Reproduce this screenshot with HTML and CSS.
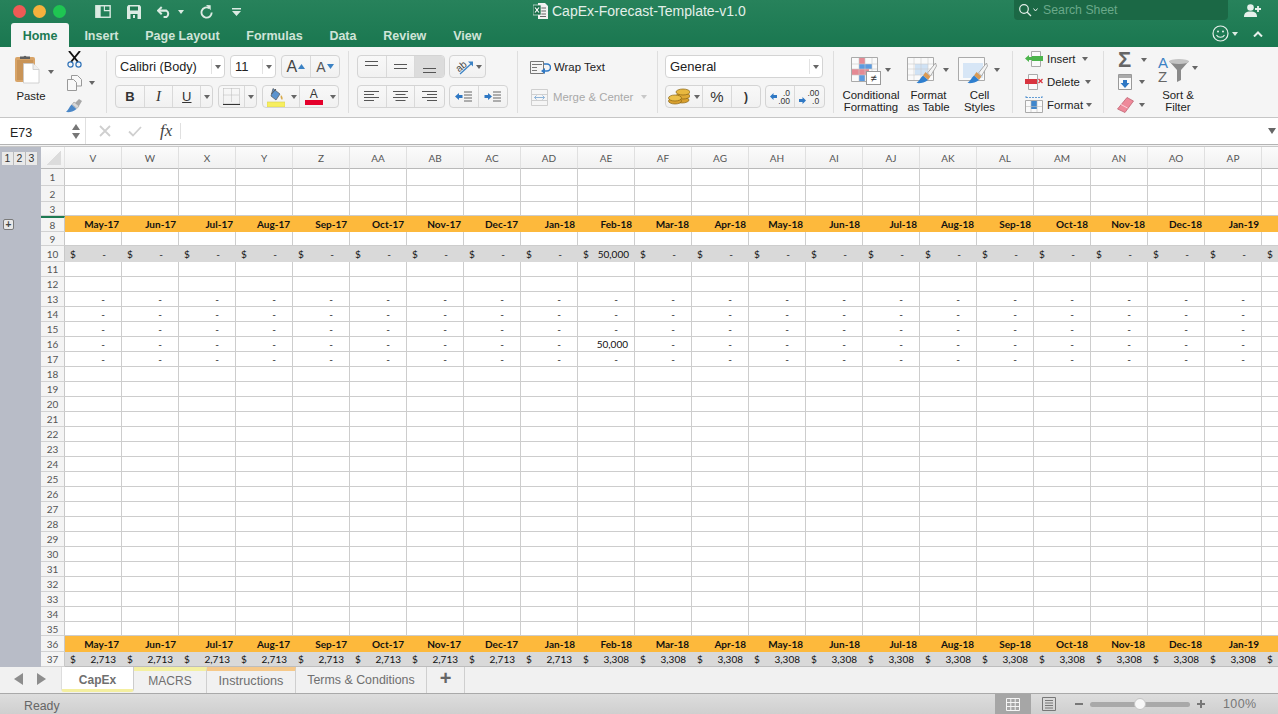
FILE: index.html
```html
<!DOCTYPE html>
<html lang="en">
<head>
<meta charset="utf-8">
<title>CapEx-Forecast-Template-v1.0</title>
<link rel="stylesheet" href="styles.css">
</head>
<body>
<svg class="defs" width="0" height="0" aria-hidden="true">
  <symbol id="brush" viewBox="0 0 20 22">
    <path d="M19 1 L11 11 L14 14 L20 4 Z" fill="#f4f4f4" stroke="#9a9a9a" stroke-width=".8"/>
    <path d="M9 10 L14 14.5 L11.5 18 L6.5 13.5 Z" fill="#d99a55"/>
    <path d="M6.5 13.5 L11.5 18 C8 21 3 21.5 0 21 C3 19 3.5 16 6.5 13.5 Z" fill="#2f7fcf"/>
  </symbol>
</svg>

<header class="titlebar">
  <div class="titlerow">
    <div class="title-left">
      <span class="light red"></span><span class="light amber"></span><span class="light green"></span>
      <svg class="qat q-side" width="16" height="13" viewBox="0 0 17 14"><rect x=".8" y=".8" width="15.4" height="12.4" fill="none" stroke="#dcebe3" stroke-width="1.5"/><rect x="1" y="1" width="5" height="12" fill="#dcebe3"/><path d="M10 1v5h6" fill="none" stroke="#dcebe3" stroke-width="1.2"/></svg>
      <svg class="qat q-save" width="14" height="14" viewBox="0 0 14 14"><path d="M0 1.5 1.5 0H12.5L14 1.5V14H0Z" fill="#dcebe3"/><rect x="3" y="1.5" width="8" height="4" fill="#1f7a52"/><rect x="3.5" y="9" width="7" height="5" fill="#1f7a52"/><rect x="6" y="10" width="2" height="3" fill="#dcebe3"/></svg>
      <svg class="qat q-undo" width="15" height="12" viewBox="0 0 16 13"><path d="M5 1 1 5l4 4" fill="none" stroke="#dcebe3" stroke-width="2.2"/><path d="M2 5h8a4 4 0 0 1 0 7H7" fill="none" stroke="#dcebe3" stroke-width="2.2"/></svg>
      <span class="caret light-caret q-undo-caret"></span>
      <svg class="qat q-redo" width="13" height="14" viewBox="0 0 14 15"><path d="M10 3.4A5.5 5.5 0 1 0 12.6 8" fill="none" stroke="#dcebe3" stroke-width="2"/><path d="M6.500 0 11.500 .2 11.500 5.500Z" fill="#dcebe3"/></svg>
      <svg class="qat q-more" width="9" height="8" viewBox="0 0 9 8"><path d="M0 0h9v1.500H0ZM0 3h9L4.500 8Z" fill="#dcebe3"/></svg>
    </div>
    <svg class="doc-icon" width="15" height="16" viewBox="0 0 15 16"><path d="M5 0h7l3 3v13H5Z" fill="#f2f2f2"/><path d="M7 5h6M7 8h6M7 11h6M7 13.500h6" stroke="#666" stroke-width="1"/><rect x="0" y="2" width="8" height="10" fill="#1b6f4a" stroke="#e8f0ec" stroke-width=".7"/><path d="M2 4.500 6 9.500M6 4.500 2 9.500" stroke="#fff" stroke-width="1.200"/></svg>
    <div class="doc-title">CapEx-Forecast-Template-v1.0</div>
    <div class="search">
      <svg width="14" height="14" viewBox="0 0 14 14"><circle cx="6" cy="6" r="4.300" fill="none" stroke="#e4efe9" stroke-width="1.200"/><path d="m9 9 4 4" stroke="#e4efe9" stroke-width="1.300"/></svg>
      <svg class="search-chev" width="5" height="4" viewBox="0 0 5 4"><path d="M.5.500 2.500 3l2-2.500" fill="none" stroke="#e4efe9"/></svg>
      <span class="search-text">Search Sheet</span>
    </div>
    <svg class="share" width="18" height="13" viewBox="0 0 18 13"><circle cx="6.500" cy="3.500" r="3.300" fill="#e6f0eb"/><path d="M0 13c0-4 2-5.500 6.500-5.500S13 9 13 13Z" fill="#e6f0eb"/><path d="M14 2v6M11 5h6" stroke="#e6f0eb" stroke-width="1.800"/></svg>
  </div>
  <div class="tabrow">
    <nav class="ribbon-tabs">
      <span class="rtab active">Home</span>
      <span class="rtab">Insert</span>
      <span class="rtab">Page Layout</span>
      <span class="rtab">Formulas</span>
      <span class="rtab">Data</span>
      <span class="rtab">Review</span>
      <span class="rtab">View</span>
    </nav>
    <div class="tab-tools">
      <svg width="17" height="17" viewBox="0 0 17 17"><circle cx="8.500" cy="8.500" r="7.500" fill="none" stroke="#e6f0eb" stroke-width="1.200"/><circle cx="6" cy="6.500" r="1" fill="#e6f0eb"/><circle cx="11" cy="6.500" r="1" fill="#e6f0eb"/><path d="M4.500 10c1.500 3 6.500 3 8 0" fill="none" stroke="#e6f0eb" stroke-width="1.100"/></svg>
      <span class="caret light-caret smile-caret"></span>
      <svg class="chev-up" width="10" height="6" viewBox="0 0 10 6"><path d="M1 5.500 5 1.500l4 4" fill="none" stroke="#e6f0eb" stroke-width="2"/></svg>
    </div>
  </div>
</header>

<section class="ribbon">
  <div class="group g-clip">
    <div class="paste">
      <div class="paste-top">
        <svg width="25" height="30" viewBox="0 0 25 30"><rect x="0" y="3" width="20" height="25" rx="2" fill="#d8a468"/><rect x="2" y="6" width="16" height="20" fill="#c99457"/><path d="M5 5V2.500h3.500a2 2 0 0 1 3 0H15V5Z" fill="#5f5f5f"/><path d="M8.500 9.500h9.500l6 6V29H8.500Z" fill="#fff" stroke="#c8c8c8" stroke-width=".8"/><path d="M18 9.500v6h6" fill="#eee" stroke="#c8c8c8" stroke-width=".8"/></svg>
        <span class="caret paste-caret"></span>
      </div>
      <span class="label">Paste</span>
    </div>
    <div class="clip-tools">
      <svg width="15" height="17" viewBox="0 0 15 17"><path d="M2 0 11 11M13 0 4 11" stroke="#111" stroke-width="1.900"/><circle cx="3.500" cy="13.500" r="2.600" fill="none" stroke="#2f72b8" stroke-width="1.200"/><circle cx="11.500" cy="13.500" r="2.600" fill="none" stroke="#2f72b8" stroke-width="1.200"/></svg>
      <div class="copy-line">
        <svg width="15" height="16" viewBox="0 0 15 16"><path d="M4.500.500h6l4 4V11h-10Z" fill="#f8f8f8" stroke="#999"/><path d="M.5 4.500h6l3 3v8H.5Z" fill="#f8f8f8" stroke="#999"/></svg>
        <span class="caret copy-caret"></span>
      </div>
      <svg class="painter" width="17" height="15" viewBox="0 0 17 15"><path d="M9 5l4-4 3 2-3 5Z" fill="#a7a7a7"/><path d="M8 4l5 4-2 2.500-5-4Z" fill="#d8d8d8" stroke="#888" stroke-width=".5"/><path d="M5.500 6.500 10.500 11C7 14 3 14.500 0 14 2.500 12 3 9 5.500 6.500Z" fill="#4b87c7"/></svg>
    </div>
  </div>

  <div class="group g-font">
    <div class="row">
      <div class="combo font-name"><span>Calibri (Body)</span><i class="combo-arrow"><b class="caret"></b></i></div>
      <div class="combo font-size"><span>11</span><i class="combo-arrow"><b class="caret"></b></i></div>
      <div class="seg">
        <span class="btn w29 big-a">A<svg class="tri-up" width="7" height="5" viewBox="0 0 7 5"><path d="M0 5 3.500 0 7 5Z" fill="#3b82c4"/></svg></span>
        <span class="btn w29 small-a">A<svg class="tri-up" width="7" height="5" viewBox="0 0 7 5"><path d="M0 0 3.500 5 7 0Z" fill="#3b82c4"/></svg></span>
      </div>
    </div>
    <div class="row">
      <div class="seg">
        <span class="btn w29 bold-b">B</span>
        <span class="btn w29 ital-i">I</span>
        <span class="btn w28 under-u">U</span>
        <span class="btn w11"><b class="caret"></b></span>
      </div>
      <div class="seg">
        <span class="btn w26">
          <svg width="17" height="17" viewBox="0 0 17 17"><path d="M.5.500h16v16M.5.500v16M8.500.500v13M.5 7h16" fill="none" stroke="#b9b9b9" stroke-dasharray="1 1"/><path d="M0 16.500h17" stroke="#333" stroke-width="1.200"/></svg>
        </span>
        <span class="btn w11 no-line"><b class="caret"></b></span>
      </div>
      <div class="seg">
        <span class="btn w26 no-line">
          <svg width="18" height="20" viewBox="0 0 18 20"><path d="M6 1.500 13 7l-4 6-5-4Z" fill="#5b93cf" stroke="#555" stroke-width=".7"/><path d="M4.500 7 9 2" stroke="#555" fill="none"/><path d="M14 8c2 2 2 4 1 5-1-1-2-3-1-5Z" fill="#d8a948"/><rect x="0" y="15" width="18" height="5" fill="#f7ee5e" stroke="#d8cf55" stroke-width=".6"/></svg>
        </span>
        <span class="btn w11"><b class="caret"></b></span>
        <span class="btn w27 no-line color-a"><span class="color-a-letter">A</span><i class="red-bar"></i></span>
        <span class="btn w11 no-line"><b class="caret"></b></span>
      </div>
    </div>
  </div>

  <div class="group g-align">
    <div class="row">
      <div class="seg">
        <span class="btn w29"><svg class="al-top" width="13" height="6" viewBox="0 0 13 6"><path d="M0 .500h13M0 4.500h13" stroke="#555"/></svg></span>
        <span class="btn w29"><svg width="13" height="6" viewBox="0 0 13 6"><path d="M0 .500h13M0 4.500h13" stroke="#555"/></svg></span>
        <span class="btn w29 pressed"><svg class="al-bottom" width="13" height="6" viewBox="0 0 13 6"><path d="M0 .500h13M0 4.500h13" stroke="#555"/></svg></span>
      </div>
      <div class="seg">
        <span class="btn w35 orient">
          <svg class="orient-icon" width="19" height="17" viewBox="0 0 19 17"><text x="1" y="12" transform="rotate(-40 6 9)" class="orient-text">ab</text><path d="M5 16 17 5" stroke="#3b82c4" stroke-width="1.300"/><path d="M13 3.500h5v5Z" fill="#3b82c4"/></svg>
          <b class="caret"></b>
        </span>
      </div>
    </div>
    <div class="row">
      <div class="seg">
        <span class="btn w29"><svg width="15" height="11" viewBox="0 0 15 11"><path d="M0 .500h15M0 3.500h10M0 6.500h15M0 9.500h10" stroke="#555"/></svg></span>
        <span class="btn w29"><svg width="15" height="11" viewBox="0 0 15 11"><path d="M0 .500h15M2.500 3.500h10M0 6.500h15M2.500 9.500h10" stroke="#555"/></svg></span>
        <span class="btn w29"><svg width="15" height="11" viewBox="0 0 15 11"><path d="M0 .500h15M5 3.500h10M0 6.500h15M5 9.500h10" stroke="#555"/></svg></span>
      </div>
      <div class="seg">
        <span class="btn w29"><svg width="17" height="11" viewBox="0 0 17 11"><path d="M0 5.500 4 2v2h3.500v3H4v2Z" fill="#2f78c4" transform="translate(0 0)"/><path d="M9 1h8M9 4h8M9 7h8M9 10h8" stroke="#666"/></svg></span>
        <span class="btn w29"><svg width="17" height="11" viewBox="0 0 17 11"><path d="M8 5.500 4 2v2H.5v3H4v2Z" fill="#2f78c4"/><path d="M9 1h8M9 4h8M9 7h8M9 10h8" stroke="#666"/></svg></span>
      </div>
    </div>
  </div>

  <div class="group g-wrap">
    <div class="wrap-line">
      <svg width="21" height="13" viewBox="0 0 21 13"><path d="M.5.500h13v12H.5ZM2 3.500h10M2 6.500h5M2 9.500h5" fill="none" stroke="#777"/><path d="M14 3h3a3 3 0 0 1 0 7h-3" fill="none" stroke="#2f78c4" stroke-width="1.500"/><path d="M15 7v6l-4-3Z" fill="#2f78c4"/></svg>
      <span class="label">Wrap Text</span>
    </div>
    <div class="wrap-line merge">
      <svg width="17" height="17" viewBox="0 0 17 17"><path d="M.5.500h16v16H.5ZM.5 5.500h16M.5 11.500h16" fill="none" stroke="#cfcfcf"/><path d="M3.500 8.500h10M5.500 6.500l-2 2 2 2M11.500 6.500l2 2-2 2" fill="none" stroke="#8fb4d8"/></svg>
      <span class="label">Merge &amp; Center</span>
      <span class="caret pale-caret"></span>
    </div>
  </div>

  <div class="group g-number">
    <div class="combo general"><span>General</span><i class="combo-arrow"><b class="caret"></b></i></div>
    <div class="row">
      <div class="seg">
        <span class="btn w26 no-line">
          <svg width="22" height="17" viewBox="0 0 22 17"><ellipse cx="14" cy="12" rx="7" ry="3" fill="#d9a02e" stroke="#8a6414" stroke-width=".7"/><ellipse cx="15" cy="8" rx="7" ry="3" fill="#dfa934" stroke="#8a6414" stroke-width=".7"/><ellipse cx="15" cy="4" rx="7" ry="3" fill="#e8b83f" stroke="#8a6414" stroke-width=".7"/><ellipse cx="7" cy="13" rx="6.500" ry="3" fill="#d9a02e" stroke="#8a6414" stroke-width=".7"/><ellipse cx="7" cy="10" rx="6.500" ry="3" fill="#ecc04a" stroke="#8a6414" stroke-width=".7"/></svg>
        </span>
        <span class="btn w11"><b class="caret"></b></span>
        <span class="btn w29 percent">%</span>
        <span class="btn w29 comma">)</span>
      </div>
      <div class="seg">
        <span class="btn w29 decimal"><svg width="7" height="7" viewBox="0 0 7 7"><path d="M0 3.500 3.500 0v2H7v3H3.500v2Z" fill="#2f78c4"/></svg><span class="dec-stack"><em>.0</em><em>.00</em></span></span>
        <span class="btn w29 decimal"><svg class="low" width="7" height="7" viewBox="0 0 7 7"><path d="M7 3.500 3.500 0v2H0v3h3.500v2Z" fill="#2f78c4"/></svg><span class="dec-stack"><em>.00</em><em>.0</em></span></span>
      </div>
    </div>
  </div>

  <div class="group g-styles">
    <div class="style-item si-cond">
      <div class="style-icon">
        <svg width="30" height="28" viewBox="0 0 30 28"><path d="M.5.500h26v24H.5Z" fill="#fafafa" stroke="#aaa"/><rect x="8" y="1" width="6" height="6" fill="#e58a94"/><rect x="8" y="7" width="13" height="5" fill="#5c9be0"/><rect x="1" y="12" width="17" height="6" fill="#e58a94"/><rect x="8" y="18" width="6" height="6" fill="#5c9be0"/><path d="M8 1v23M14 1v23M21 1v23M1 7h25M1 12h25M1 18h25" stroke="#c9c9c9" stroke-width=".6"/><rect x="15.500" y="14.500" width="14" height="13" fill="#fff" stroke="#999"/><text x="22.500" y="25" class="neq">≠</text></svg>
        <span class="caret"></span>
      </div>
      <span class="label">Conditional<br>Formatting</span>
    </div>
    <div class="style-item si-table">
      <div class="style-icon">
        <svg width="32" height="27" viewBox="0 0 32 27"><path d="M.5.500h26v23H.5Z" fill="#fafafa" stroke="#aaa"/><rect x="8" y="7" width="13" height="11" fill="#cfe2f5"/><path d="M7 1v22M14 1v22M21 1v22M1 7h25M1 12h25M1 18h25" stroke="#cdcdcd" stroke-width=".6"/><use href="#brush" x="7" y="5" width="25" height="22"/></svg>
        <span class="caret"></span>
      </div>
      <span class="label">Format<br>as Table</span>
    </div>
    <div class="style-item si-cell">
      <div class="style-icon">
        <svg width="32" height="27" viewBox="0 0 32 27"><path d="M.5.500h26v23H.5Z" fill="#fafafa" stroke="#aaa"/><rect x="5" y="6" width="20" height="15" fill="#d7e6f6"/><use href="#brush" x="7" y="5" width="25" height="22"/></svg>
        <span class="caret"></span>
      </div>
      <span class="label">Cell<br>Styles</span>
    </div>
  </div>

  <div class="group g-cells">
    <div class="cell-line">
      <svg width="18" height="16" viewBox="0 0 18 16"><path d="M6.500.500h9v15h-9Z" fill="#fafafa" stroke="#aaa"/><rect x="7" y="5" width="11" height="5" fill="#4bb44b"/><path d="M0 7.500 4 4v2h3v3H4v2Z" fill="#4bb44b"/></svg>
      <span class="label">Insert</span><span class="caret c-ins"></span>
    </div>
    <div class="cell-line">
      <svg width="18" height="16" viewBox="0 0 18 16"><path d="M3.500.500h9v15h-9Z" fill="#fafafa" stroke="#aaa"/><rect x="0" y="5" width="12" height="5" fill="#d8343f"/><path d="m13.500 5 4 4m0-4-4 4" stroke="#d8343f" stroke-width="1.300"/></svg>
      <span class="label">Delete</span><span class="caret c-del"></span>
    </div>
    <div class="cell-line">
      <svg width="18" height="17" viewBox="0 0 18 17"><path d="M.5 4.500h17v12H.5Z" fill="#fafafa" stroke="#aaa"/><rect x="6" y="5" width="6" height="8" fill="#3f86cc"/><path d="M1 10.500h16M6 5v11M12 5v11" stroke="#bbb" stroke-width=".6"/><path d="M1 1.500h16M1 0v3M17 0v3" stroke="#3f86cc" stroke-width=".8" stroke-dasharray="2 1"/></svg>
      <span class="label">Format</span><span class="caret c-fmt"></span>
    </div>
  </div>

  <div class="group g-edit">
    <div class="edit-col">
      <div class="edit-line"><span class="sigma">Σ</span><span class="caret"></span></div>
      <div class="edit-line"><svg width="14" height="16" viewBox="0 0 14 16"><path d="M.5.500h13v15H.5Z" fill="#fafafa" stroke="#999"/><rect x="1" y="1" width="12" height="3" fill="#aaa"/><path d="M5 6h4v3h2.500L7 14 2.500 9H5Z" fill="#2f78c4"/></svg><span class="caret"></span></div>
      <div class="edit-line"><svg width="17" height="16" viewBox="0 0 17 16"><path d="M10 .5 16.500 4 8 15.500 .5 12Z" fill="#ee8a9a" stroke="#b85a6a" stroke-width=".7"/><path d="M4 7.500 10.500 11" stroke="#fbd3da"/></svg><span class="caret"></span></div>
    </div>
    <div class="sort">
      <div class="sort-icon">
        <svg class="sort-svg" width="32" height="26" viewBox="0 0 32 26"><text x="0" y="11" class="az-a">A</text><text x="0" y="25" class="az-z">Z</text><path d="M11 4h20l-8 9v10l-4 2V13Z" fill="#8a8a8a"/><ellipse cx="21" cy="4.500" rx="10" ry="2.400" fill="#c4c4c4"/></svg>
        <span class="caret"></span>
      </div>
      <span class="label">Sort &amp;<br>Filter</span>
    </div>
  </div>
</section>

<section class="formula">
  <div class="namebox">
    <span class="name-text">E73</span>
    <div class="stepper"><i class="st-up"></i><i class="st-down"></i></div>
  </div>
  <div class="fx-tools">
    <svg width="12" height="12" viewBox="0 0 12 12"><path d="m1 1 10 10m0-10L1 11" stroke="#cfcfcf" stroke-width="1.800"/></svg>
    <svg width="14" height="11" viewBox="0 0 14 11"><path d="m1 5.500 4 4L13 1" fill="none" stroke="#cfcfcf" stroke-width="1.800"/></svg>
    <span class="fx">fx</span>
  </div>
  <div class="formula-input"></div>
  <span class="formula-down"></span>
</section>
<div class="formula-rule"></div>

<main class="sheet">
  <aside class="outline">
    <div class="levels"><span>1</span><span>2</span><span>3</span></div>
    <span class="expand">+</span>
  </aside>
  <div class="grid" id="grid"></div>
</main>

<footer>
  <div class="sheet-tabs">
    <div class="tab-nav">
      <svg width="9" height="12" viewBox="0 0 9 12"><path d="M9 0v12L0 6Z" fill="#8d8d8d"/></svg>
      <svg width="9" height="12" viewBox="0 0 9 12"><path d="M0 0v12L9 6Z" fill="#8d8d8d"/></svg>
    </div>
    <span class="stab current">CapEx</span>
    <span class="stab macrs">MACRS</span>
    <span class="stab instr">Instructions</span>
    <span class="stab terms">Terms &amp; Conditions</span>
    <span class="stab add">+</span>
  </div>
  <div class="status">
    <span class="ready">Ready</span>
    <div class="view-btns">
      <span class="view selected"><svg width="14" height="13" viewBox="0 0 14 13"><path d="M.5.500h13v12H.5ZM.5 4.500h13M.5 8.500h13M4.800.500v12M9.200.500v12" fill="none" stroke="#f5f5f5"/></svg></span>
      <span class="view"><svg width="14" height="14" viewBox="0 0 14 14"><path d="M.5.500h13v13H.5Z" fill="none" stroke="#777"/><path d="M3 3.500h8M3 6h8M3 8.500h8M3 11h8" stroke="#777"/></svg></span>
    </div>
    <div class="zoom">
      <i class="zoom-minus"></i>
      <div class="track"><i class="knob"></i></div>
      <i class="zoom-plus"></i>
    </div>
    <span class="percent-label">100%</span>
  </div>
</footer>
<script src="app.js"></script>
</body>
</html>
```

FILE: styles.css
```css
* { box-sizing: border-box; }
html, body { margin: 0; padding: 0; }
body {
  width: 1278px; height: 714px; overflow: hidden;
  display: flex; flex-direction: column;
  font-family: "Liberation Sans", Arial, sans-serif;
  color: #333; background: #fff;
}
.defs { position: absolute; }
svg { display: block; flex: none; }
.caret {
  display: block; flex: none; width: 0; height: 0;
  border-left: 3px solid transparent; border-right: 3px solid transparent;
  border-top: 4px solid #666;
}
.light-caret { border-top-color: #dcebe3; }
.pale-caret { border-top-color: #c8c8c8; }

/* title bar */
.titlebar { height: 47px; flex: none; background: linear-gradient(#27825b, #1a7750); }
.titlerow { height: 23px; display: flex; align-items: center; }
.title-left { width: 533px; height: 100%; display: flex; align-items: center; flex: none; padding-left: 13px; }
.light { width: 13px; height: 13px; border-radius: 50%; margin-right: 7px; flex: none; }
.red { background: #ee5a55; }
.amber { background: #f5b13d; }
.green { background: #1fc552; }
.q-side { margin-left: 22px; }
.q-save { margin-left: 16px; }
.q-undo { margin-left: 16px; }
.q-undo-caret { margin-left: 6px; }
.q-redo { margin-left: 16px; }
.q-more { margin-left: 19px; }
.doc-icon { margin-top: -2px; }
.doc-title { margin-left: 4px; width: 462px; flex: none; font-size: 14px; color: #e3efe9; margin-top: -1px; white-space: nowrap; }
.search {
  width: 214px; height: 20px; margin-top: -3px; flex: none;
  background: #1b6845; border-radius: 0 0 4px 4px;
  display: flex; align-items: center; padding-left: 4px;
}
.search-chev { margin-left: 1px; }
.search-text { margin-left: 5px; font-size: 12.3px; color: #6aa98a; }
.share { margin-left: 16px; margin-top: -3px; }
.tabrow { height: 24px; display: flex; justify-content: space-between; }
.ribbon-tabs { display: flex; padding-left: 11px; align-items: stretch; }
.rtab { font-size: 12.5px; font-weight: bold; color: #cfe4d8; padding: 6px 13.4px 0; white-space: nowrap; }
.rtab.active { width: 58px; margin-right: 2px; padding: 6px 0 0; text-align: center; background: #f5f5f5; color: #1d7a52; border-radius: 3px 3px 0 0; }
.tab-tools { display: flex; align-items: center; padding: 0 15px 3px 0; }
.smile-caret { margin-left: 3px; }
.chev-up { margin-left: 15px; }

/* ribbon */
.ribbon { height: 71px; flex: none; background: #f5f5f5; border-bottom: 1px solid #c6c6c6; display: flex; padding: 4px 0 4px; }
.group { height: 62px; flex: none; border-right: 1px solid #dedede; }
.label { font-size: 11.4px; color: #222; line-height: 12px; white-space: nowrap; }
.row { display: flex; gap: 5px; }
.seg, .combo {
  height: 23px; border: 1px solid #d4d4d4; border-radius: 4px;
  background: linear-gradient(#f8f8f8, #f1f1f1); display: flex;
}
.btn { display: flex; align-items: center; justify-content: center; border-right: 1px solid #d9d9d9; height: 100%; font-size: 13px; color: #333; }
.btn:last-child, .no-line { border-right: 0; }
.w11 { width: 11px; } .w26 { width: 26px; } .w27 { width: 27px; }
.w28 { width: 28px; } .w29 { width: 28.67px; } .w35 { width: 35px; }
.combo { background: #fff; font-size: 13px; color: #222; align-items: center; padding-left: 4px; }
.combo span { flex: 1; white-space: nowrap; }
.combo-arrow { width: 13px; height: 15px; border-left: 1px solid #e2e2e2; display: flex; align-items: center; justify-content: center; }

.g-clip { width: 107px; display: flex; padding-left: 15px; }
.paste { width: 51px; display: flex; flex-direction: column; }
.paste-top { display: flex; height: 39px; padding-top: 3px; }
.paste-caret { margin: 16px 0 0 8px; }
.paste .label { margin-left: 1px; width: 30px; text-align: center; }
.clip-tools { display: flex; flex-direction: column; gap: 7px; }
.clip-tools > svg:first-child { margin-left: 1px; }
.copy-line { display: flex; align-items: center; margin-left: 1px; }
.copy-caret { margin-left: 7px; }

.g-font { width: 242px; padding: 4px 0 0 8px; display: flex; flex-direction: column; gap: 7px; }
.font-name { width: 110px; font-size: 12.7px; }
.font-size { width: 46px; }
.big-a { font-size: 16px; gap: 1px; color: #444; }
.small-a { font-size: 14px; gap: 1px; color: #555; }
.bold-b { font-weight: bold; font-size: 13px; }
.ital-i { font-style: italic; font-family: "Liberation Serif", serif; font-size: 15px; }
.under-u { text-decoration: underline; font-size: 13px; }
.color-a { flex-direction: column; justify-content: flex-start; padding-top: 2px; }
.color-a-letter { font-size: 12px; line-height: 12px; }
.red-bar { width: 18px; height: 5px; background: #e4002b; }

.g-align { width: 169px; padding: 4px 0 0 8px; display: flex; flex-direction: column; gap: 7px; }
.g-align .row { gap: 4px; }
.pressed { background: #dcdcdc; border-radius: 0 3px 3px 0; }
.al-top { margin-top: -5px; }
.al-bottom { margin-top: 9px; }
.orient { gap: 2px; padding-left: 3px; }
.orient-icon { overflow: visible; }
.orient-text { font: 10px "Liberation Sans", sans-serif; fill: #444; }

.g-wrap { width: 140px; padding: 8px 0 0 12px; display: flex; flex-direction: column; gap: 14px; }
.wrap-line { display: flex; align-items: center; gap: 3px; height: 16px; }
.merge { gap: 5px; margin-left: 1px; }
.merge .label { color: #a9a9a9; }
.merge .caret { margin-left: 3px; }

.g-number { width: 176px; padding: 4px 0 0 7px; display: flex; flex-direction: column; gap: 7px; }
.general { width: 158px; }
.g-number .row { gap: 4px; }
.percent { font-size: 15px; }
.comma { font-weight: bold; font-size: 12px; }
.decimal { gap: 1px; font-size: 0; }
.decimal .low { margin-top: 8px; }
.dec-stack { display: flex; flex-direction: column; align-items: flex-end; }
.dec-stack em { font-style: normal; font-size: 8.5px; line-height: 8px; color: #333; }

.g-styles { width: 179px; display: flex; padding-left: 5px; }
.style-item { display: flex; flex-direction: column; align-items: center; text-align: center; }
.si-cond { width: 64px; }
.si-table { width: 51px; }
.si-cell { width: 51px; }
.style-icon { height: 41px; display: flex; padding-top: 6px; }
.style-icon .caret { margin: 11px 0 0 4px; }
.si-table .style-icon, .si-cell .style-icon { margin-right: 1px; }

.neq { font: 11px "Liberation Sans", sans-serif; fill: #333; text-anchor: middle; }

.g-cells { width: 91px; padding: 0 0 0 12px; display: flex; flex-direction: column; gap: 6px; }
.cell-line { height: 17px; display: flex; align-items: center; }
.cell-line .label { margin-left: 4px; }
.c-ins { margin-left: 6px; }
.c-del { margin-left: 5px; }
.c-fmt { margin-left: 3px; }

.g-edit { flex: 1; border-right: 0; display: flex; padding-left: 14px; }
.edit-col { display: flex; flex-direction: column; gap: 6px; width: 37px; }
.edit-line { height: 17px; display: flex; align-items: center; gap: 7px; }
.sigma { width: 16px; font-size: 22px; line-height: 17px; color: #666; font-weight: bold; }
.edit-line svg { width: 14px; }
.edit-line:last-child svg { width: 17px; margin-left: -1px; }
.edit-line:last-child { gap: 5px; }
.sort { width: 46px; display: flex; flex-direction: column; align-items: center; text-align: center; }
.sort-icon { height: 41px; display: flex; padding-top: 6px; }
.sort-svg { overflow: visible; }
.sort-icon .caret { margin: 9px 0 0 2px; }
.az-a { font: 15px "Liberation Sans", sans-serif; fill: #3b82c4; }
.az-z { font: 15px "Liberation Sans", sans-serif; fill: #666; }

/* formula bar */
.formula { height: 26px; flex: none; display: flex; align-items: center; background: #fff; }
.namebox { width: 86px; height: 100%; display: flex; align-items: center; justify-content: space-between; padding: 0 5px 0 10px; border-right: 1px solid #e0e0e0; font-size: 12.5px; color: #222; }
.name-text { padding-top: 3px; }
.stepper { display: flex; flex-direction: column; gap: 3px; }
.st-up { border-left: 4px solid transparent; border-right: 4px solid transparent; border-bottom: 6px solid #777; }
.st-down { border-left: 4px solid transparent; border-right: 4px solid transparent; border-top: 6px solid #777; }
.fx-tools { width: 95px; height: 16px; display: flex; align-items: center; padding-left: 13px; border-right: 1px solid #e0e0e0; }
.fx-tools svg + svg { margin-left: 17px; }
.fx { margin-left: 18px; font: italic 17px "Liberation Serif", serif; color: #444; }
.formula-input { flex: 1; }
.formula-down { margin-right: 2px; border-left: 4px solid transparent; border-right: 4px solid transparent; border-top: 6px solid #666; }
.formula-rule { height: 3px; flex: none; border-top: 1px solid #b4b4b4; border-bottom: 1px solid #c8c8c8; background: #f2f2f2; }

/* sheet */
.sheet { height: 520px; flex: none; display: flex; overflow: hidden; }
.outline { width: 41px; flex: none; background: #b8bcc7; display: flex; flex-direction: column; align-items: flex-start; }
.levels { width: 100%; height: 22px; background: #b8bcc7; display: flex; gap: 0; padding: 5px 0 0 2px; }
.levels span { width: 12px; height: 13px; background: #e9e9e9; font: 10.5px/13px "Liberation Sans", sans-serif; color: #333; text-align: center; border-right: 1px solid #bbb; }
.expand {
  width: 11px; height: 11px; margin: 50px 0 0 3px; background: #e8e8e8; border: 1px solid #7a7a7a; border-radius: 2px;
  font: bold 10px/9px "Liberation Sans", sans-serif; text-align: center; color: #444;
}
.grid { flex: 1; overflow: hidden; font-family: Lato, "Liberation Sans", sans-serif; font-size: 10px; color: #111; }
.r { display: flex; height: 15px; }
.h14 { height: 14px; } .h16 { height: 16px; } .h17 { height: 17px; } .h22 { height: 22px; }
.rh {
  width: 24px; flex: none; background: #f4f4f4; color: #555; font-size: 10px;
  display: flex; align-items: center; justify-content: center;
  border-right: 1px solid #c8c8c8; border-bottom: 1px solid #d2d2d2;
}
.c {
  width: 57px; flex: none; border-right: 1px solid #cdcdcd; border-bottom: 1px solid #cdcdcd;
  display: flex; align-items: center; justify-content: space-between; white-space: nowrap; padding: 0 6px 0 5px;
}
.c .dash { margin-left: auto; padding-right: 10px; color: #222; }
.c .num { margin-left: auto; color: #111; }
.head .rh { background: linear-gradient(#fbfbfb, #f0f0f0); border-bottom: 1px solid #b9b9b9; border-right: 1px solid #e2e2e2; position: relative; overflow: hidden; }
.corner { width: 15px; height: 15px; background: linear-gradient(135deg, transparent 50%, #dcdcdc 50%); margin-left: 1px; }
.head .c { justify-content: center; background: linear-gradient(#fbfbfb, #f1f1f1); color: #555; font-size: 10px; border-right: 1px solid #e0e0e0; border-bottom: 1px solid #b9b9b9; padding: 0; }
.month .c { background: #fdb93c; border: 0; justify-content: flex-end; padding-right: 3px; font-weight: bold; color: #111; font-size: 10px; }
.total .c { background: #d9d9d9; border-right: 0; border-bottom: 1px solid #d9d9d9; }
.total.last .c { border-bottom: 1px solid #bdbdbd; }
.total .rh { border-bottom-color: #d2d2d2; }
.rh.sel-top { border-top: 2px solid #1d7a52; }

/* sheet tabs */
.sheet-tabs { height: 27px; flex: none; background: #f1f1f1; display: flex; border-bottom: 1px solid #a9a9a9; }
.tab-nav { width: 61px; display: flex; align-items: center; gap: 14px; padding: 0 0 3px 14px; }
.stab { font-size: 12.4px; color: #6f6f6f; display: flex; align-items: center; justify-content: center; border-right: 1px solid #cfcfcf; white-space: nowrap; padding-bottom: 0; }
.current { width: 73px; background: #fff; font-weight: bold; border-right: 1px solid #ccc; border-left: 1px solid #ddd; border-bottom: 3px solid #f4efa0; height: 25px; border-radius: 0 0 3px 3px; padding-top: 4px; font-size: 12px; }
.macrs { width: 73px; border-top: 4px solid #f4f0a2; font-size: 12px; padding-bottom: 2px; }
.instr { width: 89px; border-top: 4px solid #f6c98a; font-size: 12.7px; padding-bottom: 2px; }
.terms { width: 131px; }
.add { width: 38px; font-size: 20px; font-weight: bold; color: #666; padding-bottom: 3px; }

/* status bar */
.status { height: 20px; flex: none; background: linear-gradient(#dddddd, #cfcfcf); display: flex; align-items: center; }
.ready { width: 995px; padding: 4px 0 0 24px; font-size: 12.3px; color: #666; }
.view-btns { display: flex; width: 72px; align-self: stretch; }
.view { width: 36px; display: flex; align-items: center; justify-content: center; }
.view.selected { background: #a6a6a6; }
.zoom { display: flex; align-items: center; margin-left: 8px; }
.zoom-minus { width: 8px; height: 2px; background: #777; margin-right: 7px; }
.track { width: 100px; height: 5px; border-radius: 3px; background: #a9a9a9; display: flex; align-items: center; padding-left: 44px; }
.knob { width: 12px; height: 12px; border-radius: 50%; background: #f7f7f7; border: 1px solid #c4c4c4; flex: none; }
.zoom-plus { width: 8px; height: 8px; margin-left: 7px; background: linear-gradient(#777, #777) center/8px 2px no-repeat, linear-gradient(#777, #777) center/2px 8px no-repeat; }
.percent-label { margin-left: 18px; font-size: 12.5px; color: #777; letter-spacing: .4px; }
```

FILE: app.js
```js
var cols = ["V","W","X","Y","Z","AA","AB","AC","AD","AE","AF","AG","AH","AI","AJ","AK","AL","AM","AN","AO","AP",""];
var names = ["Jan","Feb","Mar","Apr","May","Jun","Jul","Aug","Sep","Oct","Nov","Dec"];
function month(i) {
  var m = 4 + i;
  return names[m % 12] + "-" + (17 + Math.floor(m / 12));
}
function row(cls, label, labelCls, cellFn) {
  var html = '<div class="r ' + cls + '"><div class="rh ' + labelCls + '">' + label + "</div>";
  cols.forEach(function (c, i) { html += '<div class="c">' + cellFn(c, i) + "</div>"; });
  return html + "</div>";
}
var blank = function () { return ""; };
var out = row("head h22", '<i class="corner"></i>', "", function (c) { return c; });
out += row("h17", 1, "", blank);
out += row("h16", 2, "", blank);
out += row("h14", 3, "", blank);
var monthCell = function (c, i) { return i < 21 ? month(i) : ""; };
out += row("month h16", 8, "sel-top", monthCell);
out += row("h14", 9, "", blank);
out += row("total h16", 10, "", function (c, i) {
  if (i === 21) return "<span>$</span>";
  return '<span>$</span><span class="' + (c === "AE" ? 'num">50,000' : 'dash">-') + "</span>";
});
for (var n = 11; n <= 35; n++) {
  if (n >= 13 && n <= 17) {
    out += row("", n, "", function (c, i) {
      if (i === 21) return "";
      if (c === "AE" && n === 16) return '<span class="num">50,000</span>';
      return '<span class="dash">-</span>';
    });
  } else {
    out += row(n === 35 ? "h14" : "", n, "", blank);
  }
}
out += row("month h16", 36, "", monthCell);
out += row("total last", 37, "", function (c, i) {
  return "<span>$</span>" + (i < 21 ? '<span class="num">' + (i < 9 ? "2,713" : "3,308") + "</span>" : "");
});
document.getElementById("grid").innerHTML = out;
```
